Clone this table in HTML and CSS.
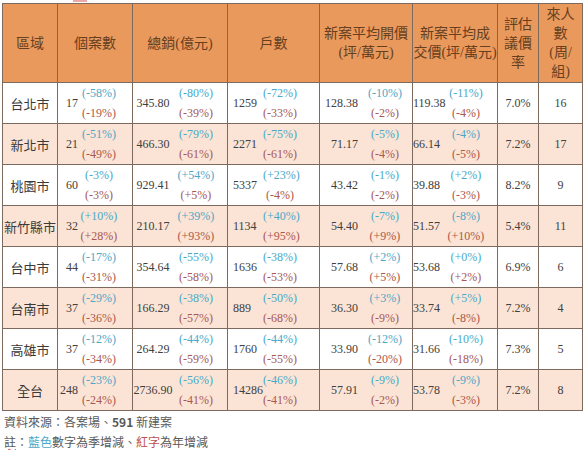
FILE: index.html
```html
<!DOCTYPE html>
<html lang="zh-Hant">
<head>
<meta charset="utf-8">
<title>新案統計</title>
<link rel="stylesheet" href="styles.css">
</head>
<body>
<div class="page">
  <div class="mark"><span></span></div>
  <div class="grid">
    <div class="row head">
      <div class="h">區域</div>
      <div class="h">個案數</div>
      <div class="h">總銷(億元)</div>
      <div class="h">戶數</div>
      <div class="h">新案平均開價<br>(坪/萬元)</div>
      <div class="h">新案平均成<br>交價(坪/萬元)</div>
      <div class="h">評估<br>議價<br>率</div>
      <div class="h">來人<br>數<br>(周/<br>組)</div>
    </div>

    <div class="row">
      <div class="reg">台北市</div>
      <div class="d c2"><span class="n">17</span><span class="p"><i class="q">(-58%)</i><i class="y">(-19%)</i></span></div>
      <div class="d c3"><span class="n">345.80</span><span class="p"><i class="q">(-80%)</i><i class="y">(-39%)</i></span></div>
      <div class="d c4"><span class="n">1259</span><span class="p"><i class="q">(-72%)</i><i class="y">(-33%)</i></span></div>
      <div class="d c5"><span class="n">128.38</span><span class="p"><i class="q">(-10%)</i><i class="y">(-2%)</i></span></div>
      <div class="d c6"><span class="n">119.38</span><span class="p"><i class="q">(-11%)</i><i class="y">(-4%)</i></span></div>
      <div class="v">7.0%</div>
      <div class="v">16</div>
    </div>

    <div class="row alt">
      <div class="reg">新北市</div>
      <div class="d c2"><span class="n">21</span><span class="p"><i class="q">(-51%)</i><i class="y">(-49%)</i></span></div>
      <div class="d c3"><span class="n">466.30</span><span class="p"><i class="q">(-79%)</i><i class="y">(-61%)</i></span></div>
      <div class="d c4"><span class="n">2271</span><span class="p"><i class="q">(-75%)</i><i class="y">(-61%)</i></span></div>
      <div class="d c5"><span class="n">71.17</span><span class="p"><i class="q">(-5%)</i><i class="y">(-4%)</i></span></div>
      <div class="d c6"><span class="n">66.14</span><span class="p"><i class="q">(-4%)</i><i class="y">(-5%)</i></span></div>
      <div class="v">7.2%</div>
      <div class="v">17</div>
    </div>

    <div class="row">
      <div class="reg">桃園市</div>
      <div class="d c2"><span class="n">60</span><span class="p"><i class="q">(-3%)</i><i class="y">(-3%)</i></span></div>
      <div class="d c3"><span class="n">929.41</span><span class="p"><i class="q">(+54%)</i><i class="y">(+5%)</i></span></div>
      <div class="d c4"><span class="n">5337</span><span class="p"><i class="q">(+23%)</i><i class="y">(-4%)</i></span></div>
      <div class="d c5"><span class="n">43.42</span><span class="p"><i class="q">(-1%)</i><i class="y">(-2%)</i></span></div>
      <div class="d c6"><span class="n">39.88</span><span class="p"><i class="q">(+2%)</i><i class="y">(-3%)</i></span></div>
      <div class="v">8.2%</div>
      <div class="v">9</div>
    </div>

    <div class="row alt">
      <div class="reg">新竹縣市</div>
      <div class="d c2"><span class="n">32</span><span class="p"><i class="q">(+10%)</i><i class="y">(+28%)</i></span></div>
      <div class="d c3"><span class="n">210.17</span><span class="p"><i class="q">(+39%)</i><i class="y">(+93%)</i></span></div>
      <div class="d c4"><span class="n">1134</span><span class="p"><i class="q">(+40%)</i><i class="y">(+95%)</i></span></div>
      <div class="d c5"><span class="n">54.40</span><span class="p"><i class="q">(-7%)</i><i class="y">(+9%)</i></span></div>
      <div class="d c6"><span class="n">51.57</span><span class="p"><i class="q">(-8%)</i><i class="y">(+10%)</i></span></div>
      <div class="v">5.4%</div>
      <div class="v">11</div>
    </div>

    <div class="row">
      <div class="reg">台中市</div>
      <div class="d c2"><span class="n">44</span><span class="p"><i class="q">(-17%)</i><i class="y">(-31%)</i></span></div>
      <div class="d c3"><span class="n">354.64</span><span class="p"><i class="q">(-55%)</i><i class="y">(-58%)</i></span></div>
      <div class="d c4"><span class="n">1636</span><span class="p"><i class="q">(-38%)</i><i class="y">(-53%)</i></span></div>
      <div class="d c5"><span class="n">57.68</span><span class="p"><i class="q">(+2%)</i><i class="y">(+5%)</i></span></div>
      <div class="d c6"><span class="n">53.68</span><span class="p"><i class="q">(+0%)</i><i class="y">(+2%)</i></span></div>
      <div class="v">6.9%</div>
      <div class="v">6</div>
    </div>

    <div class="row alt">
      <div class="reg">台南市</div>
      <div class="d c2"><span class="n">37</span><span class="p"><i class="q">(-29%)</i><i class="y">(-36%)</i></span></div>
      <div class="d c3"><span class="n">166.29</span><span class="p"><i class="q">(-38%)</i><i class="y">(-57%)</i></span></div>
      <div class="d c4"><span class="n">889</span><span class="p"><i class="q">(-50%)</i><i class="y">(-68%)</i></span></div>
      <div class="d c5"><span class="n">36.30</span><span class="p"><i class="q">(+3%)</i><i class="y">(-9%)</i></span></div>
      <div class="d c6"><span class="n">33.74</span><span class="p"><i class="q">(+5%)</i><i class="y">(-8%)</i></span></div>
      <div class="v">7.2%</div>
      <div class="v">4</div>
    </div>

    <div class="row">
      <div class="reg">高雄市</div>
      <div class="d c2"><span class="n">37</span><span class="p"><i class="q">(-12%)</i><i class="y">(-34%)</i></span></div>
      <div class="d c3"><span class="n">264.29</span><span class="p"><i class="q">(-44%)</i><i class="y">(-59%)</i></span></div>
      <div class="d c4"><span class="n">1760</span><span class="p"><i class="q">(-44%)</i><i class="y">(-55%)</i></span></div>
      <div class="d c5"><span class="n">33.90</span><span class="p"><i class="q">(-12%)</i><i class="y">(-20%)</i></span></div>
      <div class="d c6"><span class="n">31.66</span><span class="p"><i class="q">(-10%)</i><i class="y">(-18%)</i></span></div>
      <div class="v">7.3%</div>
      <div class="v">5</div>
    </div>

    <div class="row alt">
      <div class="reg">全台</div>
      <div class="d c2"><span class="n">248</span><span class="p"><i class="q">(-23%)</i><i class="y">(-24%)</i></span></div>
      <div class="d c3"><span class="n">2736.90</span><span class="p"><i class="q">(-56%)</i><i class="y">(-41%)</i></span></div>
      <div class="d c4"><span class="n">14286</span><span class="p"><i class="q">(-46%)</i><i class="y">(-41%)</i></span></div>
      <div class="d c5"><span class="n">57.91</span><span class="p"><i class="q">(-9%)</i><i class="y">(-2%)</i></span></div>
      <div class="d c6"><span class="n">53.78</span><span class="p"><i class="q">(-9%)</i><i class="y">(-3%)</i></span></div>
      <div class="v">7.2%</div>
      <div class="v">8</div>
    </div>
  </div>

  <div class="notes">
    <p>資料來源：各案場、<b>591</b> 新建案</p>
    <p><span class="wavy">註</span>：<span class="blue">藍色</span>數字為季增減、<span class="red">紅字</span>為年增減</p>
  </div>
</div>
</body>
</html>
```

FILE: styles.css
```css
html, body {
  margin: 0;
  padding: 0;
  background: #ffffff;
}

body {
  font-family: "Liberation Serif", "Noto Sans CJK TC", serif;
  color: #404040;
}

.page {
  padding-left: 2px;
}

.mark {
  height: 3px;
}

.mark span {
  display: block;
  margin-left: 71px;
  width: 14px;
  height: 2px;
  background: #eaa8a8;
}

.grid {
  display: grid;
  grid-template-columns: 55px 75px 95px 92px 93px 85px 41px 44px;
  width: max-content;
  border-left: 1px solid #7d6a5f;
  border-top: 1px solid #7d6a5f;
}

.row {
  display: contents;
}

.row > div {
  box-sizing: border-box;
  height: 41px;
  border-right: 1px solid #7d6a5f;
  border-bottom: 1px solid #7d6a5f;
  display: flex;
  align-items: center;
  background: #ffffff;
}

.row.alt > div {
  background: #fbe4d5;
}

.row.head > div {
  height: 79px;
  background: #ea995c;
  color: #66401f;
  justify-content: center;
  text-align: center;
  font-family: "Liberation Serif", "Noto Sans CJK TC", serif;
  font-size: 14px;
  line-height: 19px;
}

.reg {
  justify-content: center;
  font-family: "Noto Sans CJK TC", sans-serif;
  font-size: 13px;
  color: #3a3a3a;
  white-space: nowrap;
}

.d {
  font-size: 12px;
}

.n {
  display: block;
  flex: none;
  white-space: nowrap;
}

.p {
  display: flex;
  flex-direction: column;
  flex: none;
  text-align: center;
  line-height: 20px;
  white-space: nowrap;
}

.p i {
  font-style: normal;
}

.q {
  color: #4aa8c8;
}

.y {
  color: #a8584f;
}

/* 個案數 */
.c2 .n { width: 20px; text-align: right; }
.c2 .p { width: 38px; margin-left: 2px; }

/* 總銷 */
.c3 .n { width: 40px; text-align: center; }
.c3 .p { width: 38px; margin-left: 4px; }

/* 戶數 */
.c4 .n { width: 30px; margin-left: 5px; text-align: left; }
.c4 .p { width: 34px; }

/* 開價 */
.c5 .n { width: 38px; text-align: right; }
.c5 .p { width: 38px; margin-left: 8px; }

/* 成交價 */
.c6 .n { width: 32px; text-align: left; }
.c6 .p { width: 38px; margin-left: 2px; }

.v {
  justify-content: center;
  font-size: 12px;
}

.notes {
  font-family: "Noto Sans CJK TC", sans-serif;
  font-size: 12px;
  line-height: 20px;
  color: #595959;
  padding-left: 2px;
  padding-top: 1px;
}

.notes p {
  margin: 0;
}

.notes b {
  font-weight: 700;
}

.wavy {
  text-decoration: underline wavy #e04848;
  text-decoration-thickness: 1px;
}

.blue {
  color: #4aa8c8;
}

.red {
  color: #c0504d;
}
```
